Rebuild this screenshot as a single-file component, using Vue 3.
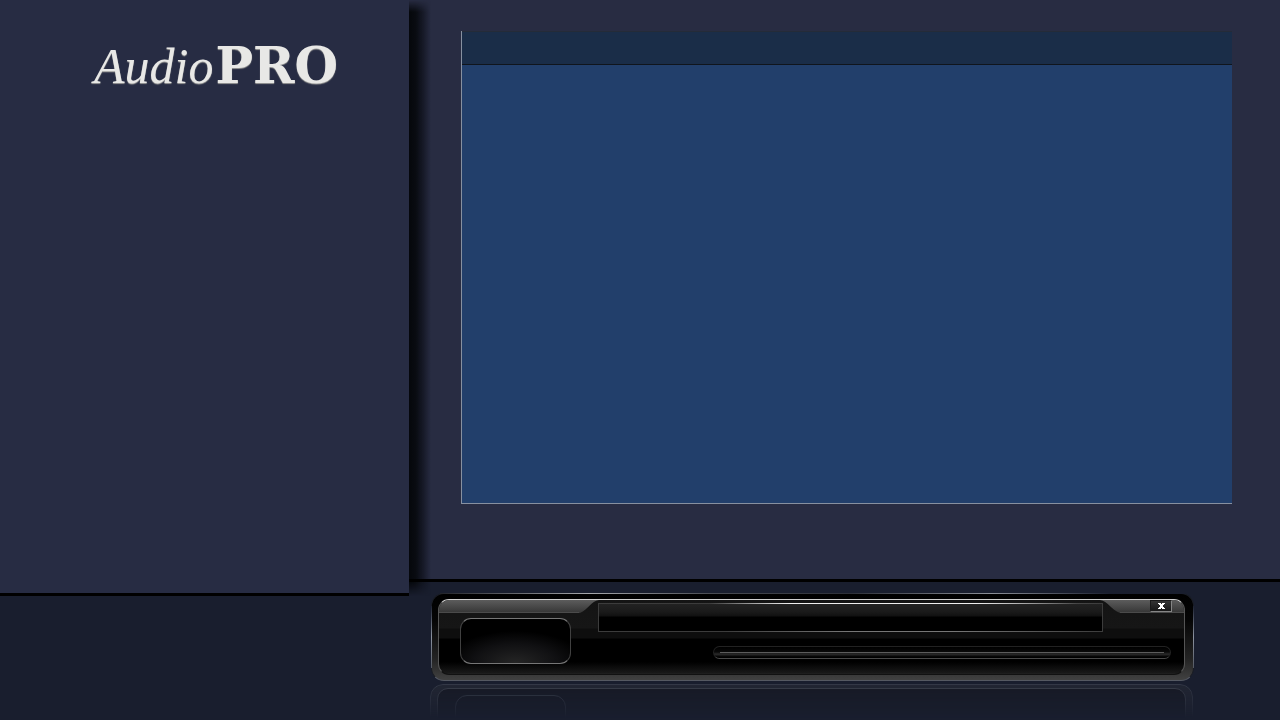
<script setup>
import { ref } from 'vue'

const position = ref(0)
const open = ref(true)
</script>

<template>
  <div class="page">
    <aside class="side">
      <div class="side-top">
        <h1 class="logo">
          <span class="script">Audio</span><span class="slab">PRO</span>
        </h1>
      </div>
    </aside>
    <div class="right">
      <main class="main">
        <section class="panel" aria-label="Playlist">
          <header class="panel-head"></header>
          <div class="panel-body"></div>
        </section>
      </main>
      <footer class="dock">
        <div v-if="open" class="player">
          <div class="case">
            <div class="gloss">
              <svg class="gloss-left" viewBox="0 0 160 13" aria-hidden="true">
                <defs>
                  <linearGradient id="gl" x1="0" y1="0" x2="0" y2="1">
                    <stop offset="0" stop-color="#5c5c5c" />
                    <stop offset="1" stop-color="#353535" />
                  </linearGradient>
                </defs>
                <path d="M0 0H160C152 1 149 10 141 13H0Z" fill="url(#gl)" />
                <path d="M0 12.5H140" fill="none" stroke="#606060" stroke-opacity=".5" />
              </svg>
              <svg class="gloss-right" viewBox="0 0 84 13" aria-hidden="true">
                <path d="M84 0H0C8 1 11 10 20 13H84Z" fill="url(#gl)" />
                <path d="M84 12.5H20" fill="none" stroke="#606060" stroke-opacity=".5" />
              </svg>
            </div>
            <div class="cover"></div>
            <div class="deck">
              <div class="display"></div>
              <input v-model="position" class="seek" type="range" min="0" max="100" aria-label="Seek" />
            </div>
            <button class="close" type="button" aria-label="Close player" @click="open = false">
              <svg viewBox="0 0 7 6" width="7" height="6" shape-rendering="crispEdges" aria-hidden="true">
                <path d="M0 0h3v1h1V0h3v1H6v1H5v2h1v1h1v1H4V5H3v1H0V5h1V4h1V2H1V1H0Z" fill="#fff" />
              </svg>
            </button>
          </div>
        </div>
        <div v-if="open" class="mirror">
          <div class="mirror-case">
            <div class="mirror-cover"></div>
          </div>
        </div>
      </footer>
    </div>
  </div>
</template>

<style>
body {
  background: #191e2e;
}
</style>

<style scoped>
* {
  box-sizing: border-box;
}
.page {
  display: flex;
  height: 100vh;
  overflow: hidden;
  background: #191e2e;
}
.side {
  position: relative;
  z-index: 1;
  flex: 0 0 409px;
}
.side-top {
  height: calc(100vh - 124px);
  padding: 38px 0 0 94px;
  background: #272c43;
  border-bottom: 3px solid #000;
}
.side-top::after {
  content: "";
  position: absolute;
  top: 0;
  left: 409px;
  width: 22px;
  height: calc(100vh - 124px);
  background: linear-gradient(90deg, #05070b 0, #090b11 30%, rgba(14, 17, 27, .75) 60%, rgba(25, 30, 46, 0));
  mask-image: linear-gradient(transparent, #000 12px, #000 calc(100% - 14px), transparent);
}
.logo {
  display: flex;
  align-items: baseline;
  gap: 2px;
  margin: 0;
  color: #e8e8e6;
  font-weight: 400;
  text-shadow: 0 1px 1px #9a9a98;
}
.script {
  font: italic 50px/56px "Liberation Serif", serif;
}
.slab {
  font: bold 50px/56px "DejaVu Serif", serif;
}
.right {
  display: flex;
  flex: 1;
  flex-direction: column;
  min-width: 0;
}
.main {
  flex: 1;
  padding: 31px 48px 75px 52px;
  background: #282c42;
}
.panel {
  display: flex;
  flex-direction: column;
  height: 100%;
  border-left: 1px solid #8790a0;
  border-bottom: 1px solid #8790a0;
  background: #223f6b;
}
.panel-head {
  height: 34px;
  background: #1a2d48;
  border-top: 1px solid #242b38;
  border-bottom: 1px solid #10151c;
}
.dock {
  position: relative;
  height: 141px;
  padding: 11px 86px 0 22px;
  overflow: hidden;
  border-top: 3px solid #000;
  z-index: 2;
}
.player {
  position: relative;
  height: 88px;
  padding: 5px 8px 5px 6px;
  border-radius: 13px;
  background: linear-gradient(#000 0, #050505 30%, #232323 75%, #414141 100%);
  border: 1px solid #1a1d24;
  border-bottom-color: #555962;
}
.player::before {
  content: "";
  position: absolute;
  top: -1px;
  left: 8px;
  right: 8px;
  height: 1px;
  background: linear-gradient(90deg, #22242a, #a6a8ac 20%, #4a4d54 36%, #2c2f38 55%, #8c9098 74%, #191e2e 90%);
}
.player::after {
  content: "";
  position: absolute;
  top: 12px;
  bottom: 12px;
  left: -1px;
  right: -1px;
  border: solid;
  border-width: 0 1px;
  border-image: linear-gradient(#191e2e, #8c93a0 50%, #50555f) 1;
  pointer-events: none;
}
.case {
  position: relative;
  display: flex;
  height: 100%;
  padding: 18px 13px 0 21px;
  border: 1px solid #555;
  border-top-color: #d0d0d0;
  border-bottom-color: #111;
  border-radius: 11px;
  overflow: hidden;
  background: linear-gradient(#141414 0, #161616 28px, #0e0e0e 29px, #0e0e0e 38px, #000 39px, #000 62px, #191919 73px, #222 100%);
}
.gloss {
  position: absolute;
  inset: 0 0 auto;
  display: flex;
  justify-content: space-between;
  height: 13px;
}
.gloss-left {
  width: 160px;
}
.gloss-right {
  width: 84px;
}
.cover {
  flex: 0 0 111px;
  height: 46px;
  border: 1px solid #404040;
  border-top-color: #777;
  border-bottom-color: #777;
  border-radius: 11px;
  background: radial-gradient(ellipse 70px 32px at 50% 100%, #252525, #101012 60%, #000);
}
.deck {
  display: flex;
  flex: 1;
  flex-direction: column;
  align-items: flex-end;
  margin: -15px 0 0 27px;
}
.display {
  position: relative;
  align-self: stretch;
  height: 29px;
  margin-right: 68px;
  border: 1px solid;
  border-image: linear-gradient(90deg, #3c3c3c 25%, #777 50%, #777 70%, #3c3c3c) 1;
  background: linear-gradient(#222, #1a1a1a 8px, #111 12px, #000 13px);
}
.display::before {
  content: "";
  position: absolute;
  inset: -1px 0 auto;
  height: 1px;
  background: linear-gradient(90deg, transparent 22%, #eee 38%, #eee 75%, transparent 95%);
}
.seek {
  width: 80%;
  height: 13px;
  margin: 14px 0 0;
  appearance: none;
  border: 1px solid #222;
  border-bottom-color: #484848;
  border-radius: 7px;
  background:
    linear-gradient(#5c5c5c, #5c5c5c) center / calc(100% - 12px) 1px no-repeat,
    linear-gradient(#000, #080808 45%, #2b2b2b 65%, #000 90%);
}
.seek::-webkit-slider-thumb {
  appearance: none;
  width: 10px;
  height: 10px;
  background: transparent;
}
.close {
  position: absolute;
  top: 0;
  right: 12px;
  display: flex;
  align-items: center;
  justify-content: center;
  width: 22px;
  height: 12px;
  padding: 0;
  border: 1px solid #1a1a1a;
  border-right-color: #858585;
  border-bottom-color: #858585;
  background: linear-gradient(#333, #171717);
}
.mirror {
  height: 60px;
  margin: 3px 1px 0 -1px;
  padding: 3px 6px;
  border: 1px solid #343947;
  border-radius: 13px;
  background: #222633;
  mask-image: linear-gradient(#000, transparent 34px);
}
.mirror-case {
  height: 60px;
  padding: 6px 17px;
  border: 1px solid #3a3e4a;
  border-radius: 11px;
  background: #171a25;
}
.mirror-cover {
  width: 111px;
  height: 46px;
  border: 1px solid #343946;
  border-radius: 12px;
}
</style>
